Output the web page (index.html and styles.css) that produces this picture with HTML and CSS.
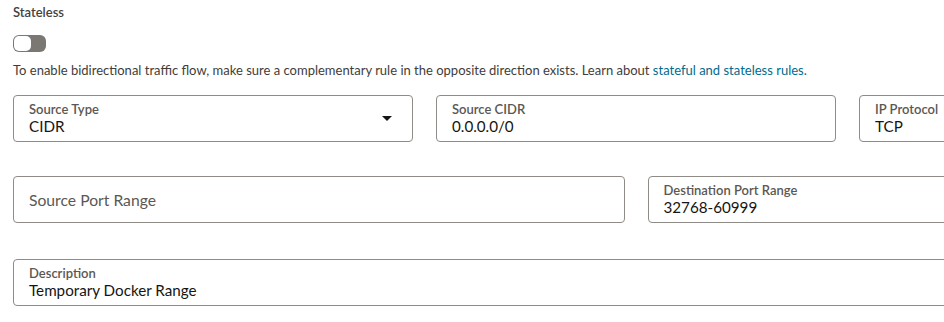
FILE: index.html
```html
<!DOCTYPE html>
<html lang="en">
<head>
  <meta charset="UTF-8">
  <title>Ingress Rule</title>
  <link rel="stylesheet" href="styles.css">
</head>
<body>
  <div class="rule-form">
    <div class="stateless">
      <div class="stateless-label">Stateless</div>
      <button class="toggle" type="button" aria-pressed="false"><span class="knob"></span></button>
      <p class="help">To enable bidirectional traffic flow, make sure a complementary rule in the opposite direction exists. Learn about <a href="#">stateful and stateless rules.</a></p>
    </div>

    <div class="row row-three">
      <div class="field select">
        <div class="field-text">
          <label>Source Type</label>
          <div class="value">CIDR</div>
        </div>
        <span class="caret"></span>
      </div>
      <div class="field">
        <div class="field-text">
          <label>Source CIDR</label>
          <div class="value">0.0.0.0/0</div>
        </div>
      </div>
      <div class="field">
        <div class="field-text">
          <label>IP Protocol</label>
          <div class="value">TCP</div>
        </div>
      </div>
    </div>

    <div class="row row-two">
      <div class="field empty">
        <div class="placeholder">Source Port Range</div>
      </div>
      <div class="field">
        <div class="field-text">
          <label>Destination Port Range</label>
          <div class="value">32768-60999</div>
        </div>
      </div>
    </div>

    <div class="row row-last">
      <div class="field">
        <div class="field-text">
          <label>Description</label>
          <div class="value">Temporary Docker Range</div>
        </div>
      </div>
    </div>
  </div>
</body>
</html>
```
FILE: styles.css
```css
body {
  margin: 0;
  background: #ffffff;
  font-family: Lato, "Open Sans", sans-serif;
  color: #161513;
  overflow: hidden;
}

.rule-form {
  width: 1246px;
  padding: 5px 0 0 13px;
}

.stateless-label {
  font-size: 13px;
  font-weight: 600;
  color: #45423f;
  line-height: 15px;
}

.toggle {
  display: block;
  margin: 15px 0 0 0;
  padding: 0;
  width: 33px;
  height: 17px;
  border: none;
  border-radius: 6px;
  background: #7b7773;
  position: relative;
  cursor: pointer;
}

.toggle .knob {
  position: absolute;
  top: 1px;
  left: 1px;
  width: 17px;
  height: 15px;
  border-radius: 5px;
  background: #ffffff;
}

.help {
  margin: 8px 0 0 0;
  font-size: 13px;
  line-height: 20px;
  color: #3f3d3a;
}

.help a {
  color: #006b8f;
  text-decoration: none;
}

.row {
  display: grid;
  grid-template-columns: 1fr;
  gap: 23px;
  margin-top: 34px;
}

.row-three {
  grid-template-columns: repeat(3, 1fr);
  margin-top: 15px;
}

.row-two {
  grid-template-columns: repeat(2, 1fr);
}

.row-last {
  margin-top: 36px;
}

.field {
  box-sizing: border-box;
  height: 47px;
  border: 1px solid #8f8b87;
  border-radius: 4px;
  padding: 0 15px;
  display: flex;
  align-items: center;
}

.field-text {
  flex: 1;
}

.field label {
  display: block;
  font-size: 13px;
  font-weight: 600;
  color: #5b5854;
  line-height: 15px;
}

.value {
  font-size: 15.2px;
  line-height: 19px;
}

.placeholder {
  font-size: 15.7px;
  color: #5b5854;
}

.caret {
  width: 0;
  height: 0;
  border-left: 5px solid transparent;
  border-right: 5px solid transparent;
  border-top: 5px solid #161513;
  margin-right: 5px;
}
```
